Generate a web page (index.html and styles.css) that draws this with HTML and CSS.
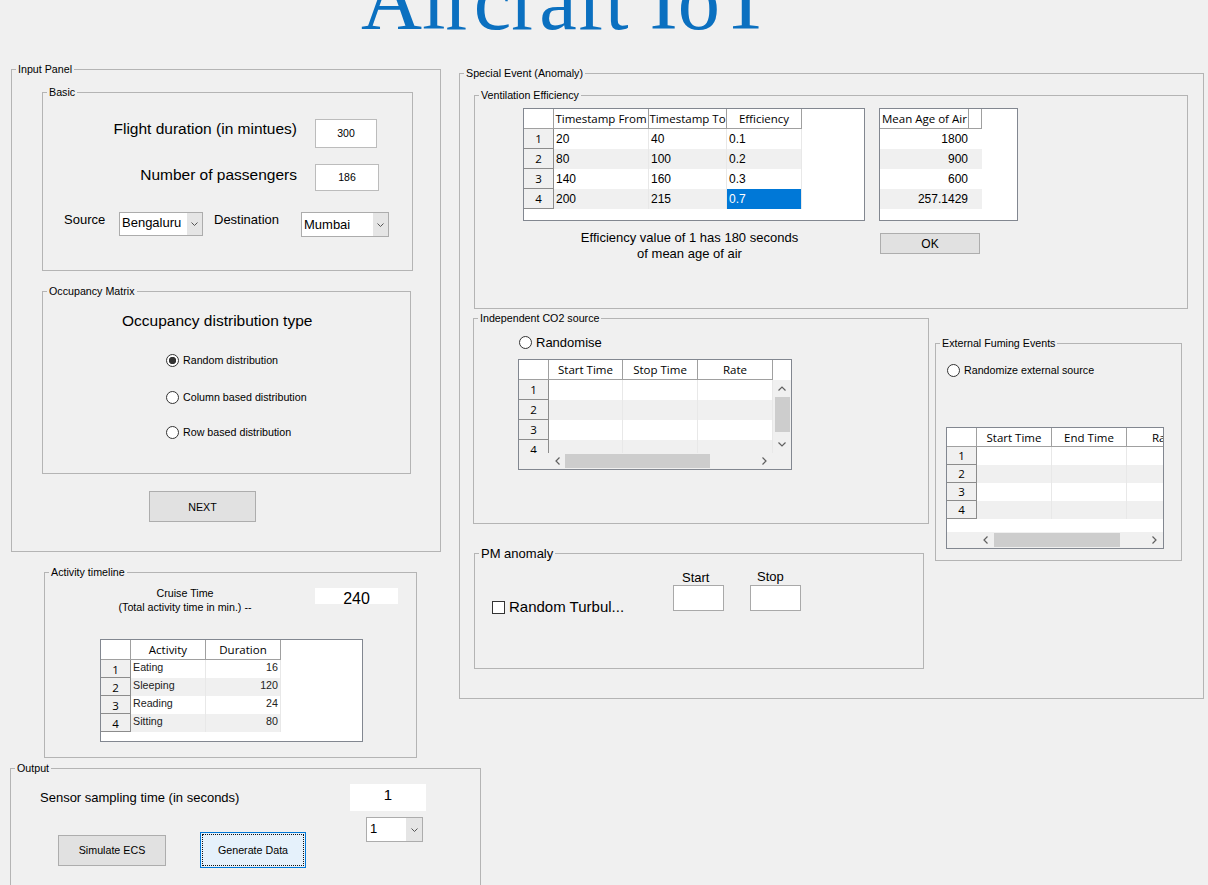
FILE: index.html
```html
<!DOCTYPE html>
<html>
<head>
<meta charset="utf-8">
<title>Aircraft IoT</title>
<link rel="stylesheet" href="styles.css">
</head>
<body>
<div class="app">
  <h1 class="title">Aircraft IoT</h1>
  <div class="main">
    <div class="col-left">
      <fieldset class="panel p-input">
        <legend>Input Panel</legend>
        <fieldset class="panel p-basic">
          <legend>Basic</legend>
          <div class="brow brow1"><div class="lbl-big">Flight duration (in mintues)</div><div class="edit e300">300</div></div>
          <div class="brow brow2"><div class="lbl-big lbl2">Number of passengers</div><div class="edit e186">186</div></div>
          <div class="brow brow3">
            <div class="lbl-src">Source</div>
            <div class="select sel-beng"><span class="sel-text">Bengaluru</span><span class="sel-arrow"><svg width="7" height="4" viewBox="0 0 7 4"><path d="M0.5 0.5 L3.5 3.5 L6.5 0.5" fill="none" stroke="#555" stroke-width="1"/></svg></span></div>
            <div class="lbl-dst">Destination</div>
            <div class="select sel-mum"><span class="sel-text">Mumbai</span><span class="sel-arrow"><svg width="7" height="4" viewBox="0 0 7 4"><path d="M0.5 0.5 L3.5 3.5 L6.5 0.5" fill="none" stroke="#555" stroke-width="1"/></svg></span></div>
          </div>
        </fieldset>
        <fieldset class="panel p-occ">
          <legend>Occupancy Matrix</legend>
          <div class="occ-head">Occupancy distribution type</div>
          <div class="radio-row r1"><span class="radio on"></span><span>Random distribution</span></div>
          <div class="radio-row r2"><span class="radio"></span><span>Column based distribution</span></div>
          <div class="radio-row r3"><span class="radio"></span><span>Row based distribution</span></div>
        </fieldset>
        <button class="btn btn-next">NEXT</button>
      </fieldset>

      <fieldset class="panel p-act">
        <legend>Activity timeline</legend>
        <div class="act-top">
          <div class="cruise">Cruise Time<br>(Total activity time in min.) --</div>
          <div class="box240">240</div>
        </div>
        <div class="uit t-act">
          <div class="tg tg-act">
            <div class="hc"></div><div class="hc">Activity</div><div class="hc">Duration</div>
            <div class="rn">1</div><div class="dc">Eating</div><div class="dc num">16</div>
            <div class="rn">2</div><div class="dc alt">Sleeping</div><div class="dc alt num">120</div>
            <div class="rn">3</div><div class="dc">Reading</div><div class="dc num">24</div>
            <div class="rn">4</div><div class="dc alt">Sitting</div><div class="dc alt num">80</div>
          </div>
        </div>
      </fieldset>

      <fieldset class="panel p-out">
        <legend>Output</legend>
        <div class="out-body">
          <div class="out-left">
            <div class="out-label">Sensor sampling time (in seconds)</div>
            <div class="out-btns">
              <button class="btn b-sim">Simulate ECS</button>
              <button class="btn b-gen">Generate Data</button>
            </div>
          </div>
          <div class="out-right">
            <div class="box-one">1</div>
            <div class="select sel-one"><span class="sel-text">1</span><span class="sel-arrow"><svg width="7" height="4" viewBox="0 0 7 4"><path d="M0.5 0.5 L3.5 3.5 L6.5 0.5" fill="none" stroke="#555" stroke-width="1"/></svg></span></div>
          </div>
        </div>
      </fieldset>
    </div>

    <div class="col-right">
      <fieldset class="panel p-special">
        <legend>Special Event (Anomaly)</legend>
        <fieldset class="panel p-vent">
          <legend>Ventilation Efficiency</legend>
          <div class="vent-body">
            <div class="vent-col">
              <div class="uit t-vent">
                <div class="tg tg-vent">
                  <div class="hc"></div><div class="hc">Timestamp From</div><div class="hc">Timestamp To</div><div class="hc">Efficiency</div>
                  <div class="rn">1</div><div class="dc">20</div><div class="dc">40</div><div class="dc">0.1</div>
                  <div class="rn">2</div><div class="dc alt">80</div><div class="dc alt">100</div><div class="dc alt">0.2</div>
                  <div class="rn">3</div><div class="dc">140</div><div class="dc">160</div><div class="dc">0.3</div>
                  <div class="rn">4</div><div class="dc alt">200</div><div class="dc alt">215</div><div class="dc sel">0.7</div>
                </div>
              </div>
              <div class="vent-note">Efficiency value of 1 has 180 seconds<br>of mean age of air</div>
            </div>
            <div class="age-col">
              <div class="uit t-age">
                <div class="tg tg-age">
                  <div class="hc hl">Mean Age of Air</div><div class="hc"></div>
                  <div class="dc num">1800</div><div class="dc"></div>
                  <div class="dc alt num">900</div><div class="dc alt"></div>
                  <div class="dc num">600</div><div class="dc"></div>
                  <div class="dc alt num">257.1429</div><div class="dc alt"></div>
                </div>
              </div>
              <button class="btn btn-ok">OK</button>
            </div>
          </div>
        </fieldset>

        <div class="lower">
          <div class="lower-left">
            <fieldset class="panel p-co2">
              <legend>Independent CO2 source</legend>
              <div class="radio-row co2-radio"><span class="radio"></span><span>Randomise</span></div>
              <div class="uit t-co2">
                <div class="sg sg-co2">
                  <div class="vp">
                    <div class="tg tg-co2">
                      <div class="hc"></div><div class="hc">Start Time</div><div class="hc">Stop Time</div><div class="hc">Rate</div>
                      <div class="rn">1</div><div class="dc"></div><div class="dc"></div><div class="dc"></div>
                      <div class="rn">2</div><div class="dc alt"></div><div class="dc alt"></div><div class="dc alt"></div>
                      <div class="rn">3</div><div class="dc"></div><div class="dc"></div><div class="dc"></div>
                      <div class="rn">4</div><div class="dc alt"></div><div class="dc alt"></div><div class="dc alt"></div>
                    </div>
                  </div>
                  <div class="vscroll">
                    <div class="vs-head"></div>
                    <div class="vs-track">
                      <div class="sb-btn sb-v"><svg width="8" height="5" viewBox="0 0 8 5"><path d="M0.5 4.5 L4 1 L7.5 4.5" fill="none" stroke="#606060" stroke-width="1.2"/></svg></div>
                      <div class="vs-thumb"></div>
                      <div class="sb-fill"></div>
                      <div class="sb-btn sb-v"><svg width="8" height="5" viewBox="0 0 8 5"><path d="M0.5 0.5 L4 4 L7.5 0.5" fill="none" stroke="#606060" stroke-width="1.2"/></svg></div>
                    </div>
                  </div>
                  <div class="hscroll">
                    <div class="hs-gap"></div>
                    <div class="sb-btn sb-h hs-l16"><svg width="5" height="8" viewBox="0 0 5 8"><path d="M4.5 0.5 L1 4 L4.5 7.5" fill="none" stroke="#606060" stroke-width="1.2"/></svg></div>
                    <div class="hs-thumb co2-thumb"></div>
                    <div class="sb-fill"></div>
                    <div class="sb-btn sb-h"><svg width="5" height="8" viewBox="0 0 5 8"><path d="M0.5 0.5 L4 4 L0.5 7.5" fill="none" stroke="#606060" stroke-width="1.2"/></svg></div>
                  </div>
                  <div class="sb-corner"></div>
                </div>
              </div>
            </fieldset>

            <fieldset class="panel p-pm">
              <legend>PM anomaly</legend>
              <div class="pm-body">
                <div class="pm-check"><span class="checkbox"></span><span>Random Turbul...</span></div>
                <div class="pm-field">
                  <div class="pm-lbl pm-start">Start</div>
                  <div class="pm-edit"></div>
                </div>
                <div class="pm-field pm-stop">
                  <div class="pm-lbl pm-stoplbl">Stop</div>
                  <div class="pm-edit"></div>
                </div>
              </div>
            </fieldset>
          </div>

          <fieldset class="panel p-ext">
            <legend>External Fuming Events</legend>
            <div class="radio-row ext-radio"><span class="radio"></span><span>Randomize external source</span></div>
            <div class="uit t-ext">
              <div class="sg sg-ext">
                <div class="vp">
                  <div class="tg tg-ext">
                    <div class="hc"></div><div class="hc">Start Time</div><div class="hc">End Time</div><div class="hc">Rate</div>
                    <div class="rn">1</div><div class="dc"></div><div class="dc"></div><div class="dc"></div>
                    <div class="rn">2</div><div class="dc alt"></div><div class="dc alt"></div><div class="dc alt"></div>
                    <div class="rn">3</div><div class="dc"></div><div class="dc"></div><div class="dc"></div>
                    <div class="rn">4</div><div class="dc alt"></div><div class="dc alt"></div><div class="dc alt"></div>
                  </div>
                </div>
                <div class="hscroll">
                  <div class="hs-gap"></div>
                  <div class="sb-btn sb-h"><svg width="5" height="8" viewBox="0 0 5 8"><path d="M4.5 0.5 L1 4 L4.5 7.5" fill="none" stroke="#606060" stroke-width="1.2"/></svg></div>
                  <div class="hs-thumb ext-thumb"></div>
                  <div class="sb-fill"></div>
                  <div class="sb-btn sb-h"><svg width="5" height="8" viewBox="0 0 5 8"><path d="M0.5 0.5 L4 4 L0.5 7.5" fill="none" stroke="#606060" stroke-width="1.2"/></svg></div>
                </div>
              </div>
            </div>
          </fieldset>
        </div>
      </fieldset>
    </div>
  </div>
</div>
</body>
</html>
```

FILE: styles.css
```css
* { box-sizing: border-box; }
html, body { margin: 0; padding: 0; background: #f0f0f0; }
body { font-family: "Liberation Sans", Arial, sans-serif; color: #000; }

.app { display: flow-root; width: 1208px; height: 885px; overflow: hidden; background: #f0f0f0; }

.title {
  margin: -41px 0 0;
  padding-left: 361px;
  height: 104px;
  font-family: "Liberation Serif", "Times New Roman", serif;
  font-weight: 400;
  font-size: 84.5px;
  line-height: 84.5px;
  color: #0b70c0;
  white-space: nowrap;
}

.main { display: flex; align-items: flex-start; }
.col-left { flex: none; width: 449px; margin-left: 10px; }
.col-right { flex: none; width: 745px; margin-top: 4px; }

/* panels */
.panel { display: block; margin: 0; padding: 0; min-width: 0; border: 1px solid #b4b4b4; }
.panel > legend { margin-left: 4px; padding: 0 2px; font-size: 10.7px; line-height: 13px; }

.p-input { width: 430px; height: 489px; margin-left: 1px; }
.p-basic { width: 371px; height: 185px; margin: 10px 0 0 30px; }
.p-occ { width: 369px; height: 189px; margin: 14px 0 0 30px; }
.p-act { width: 373px; height: 192px; margin: 14px 0 0 34px; }
.p-out { width: 471px; height: 135px; margin-top: 4px; }

.p-special { width: 745px; height: 632px; }
.p-vent { width: 714px; height: 220px; margin: 9px 0 0 14px; }
.lower { display: flex; align-items: flex-start; margin-top: 3px; }
.lower-left { flex: none; margin-left: 13px; }
.p-co2 { width: 456px; height: 212px; }
.p-pm { width: 450px; height: 123px; margin: 22px 0 0 1px; }
.p-pm > legend { font-size: 13px; line-height: 15px; }
.p-ext { flex: none; width: 247px; height: 224px; margin: 25px 0 0 6px; }

/* controls */
.btn {
  display: block; padding: 0; margin: 0;
  font-family: "Liberation Sans", Arial, sans-serif; font-size: 10.7px; color: #000;
  background: #e1e1e1; border: 1px solid #adadad;
}
.edit { background: #fff; border: 1px solid #bcbcbc; text-align: center; font-size: 10.5px; }

.select { display: flex; background: #fff; border: 1px solid #acacac; }
.sel-text { flex: 1; padding-left: 2px; font-size: 13px; white-space: nowrap; overflow: hidden; }
.sel-arrow { flex: none; width: 15px; background: #e5e5e5; display: flex; align-items: center; justify-content: center; }

.radio-row { display: flex; align-items: center; height: 13px; font-size: 10.7px; line-height: 13px; white-space: nowrap; }
.radio {
  flex: none; width: 13px; height: 13px; margin-right: 4px;
  border: 1px solid #333; border-radius: 50%; background: #fff;
}
.radio.on { background: radial-gradient(circle, #333 0 3.4px, #fff 4px); }
.checkbox { flex: none; width: 13px; height: 13px; margin-right: 4px; border: 1px solid #333; background: #fff; }

/* basic */
.brow { display: flex; align-items: flex-start; }
.brow1 { margin-top: 20px; }
.brow2 { margin-top: 16px; }
.brow3 { margin-top: 21px; }
.lbl-big { width: 254px; text-align: right; font-size: 15.5px; line-height: 18px; margin-top: 1px; white-space: nowrap; }
.lbl2 { margin-top: 2px; }
.e300 { width: 62px; height: 29px; line-height: 27px; margin-left: 18px; }
.e186 { width: 64px; height: 27px; line-height: 25px; margin-left: 18px; }
.lbl-src { width: 55px; margin-left: 21px; font-size: 13px; line-height: 15px; }
.lbl-dst { width: 87px; margin-left: 11px; font-size: 13px; line-height: 15px; }
.sel-beng { width: 84px; height: 24px; }
.sel-beng .sel-text { line-height: 19px; }
.sel-mum { width: 88px; height: 25px; }
.sel-mum .sel-text { line-height: 23px; }

/* occupancy */
.occ-head { margin: 14px 0 0 79px; font-size: 15.5px; line-height: 18px; white-space: nowrap; }
.p-occ .radio-row { margin-left: 123px; }
.r1 { margin-top: 24px; }
.r2 { margin-top: 24px; }
.r3 { margin-top: 22px; }
.btn-next { width: 107px; height: 31px; margin: 17px 0 0 137px; }

/* activity */
.act-top { display: flex; align-items: flex-start; height: 35px; }
.cruise { width: 160px; margin: 7px 0 0 60px; text-align: center; font-size: 10.7px; line-height: 14px; white-space: nowrap; }
.box240 { width: 83px; height: 16px; margin: 9px 0 0 50px; background: #fff; text-align: center; font-size: 16px; line-height: 16px; padding-top: 3px; }
.t-act { width: 263px; height: 103px; margin: 25px 0 0 55px; }

/* output */
.out-body { display: flex; align-items: flex-start; }
.out-left { flex: none; width: 339px; }
.out-label { margin: 15px 0 0 29px; font-size: 13px; line-height: 15px; white-space: nowrap; }
.out-btns { display: flex; align-items: center; margin-top: 27px; }
.b-sim { width: 108px; height: 31px; margin-left: 47px; }
.b-gen { width: 106px; height: 36px; margin-left: 34px; background: #e5f1fb; border: 1px solid #0078d7; outline: 1px dotted #111; outline-offset: -3px; }
.box-one { width: 76px; height: 27px; margin-top: 9px; background: #fff; text-align: center; font-size: 15px; line-height: 22px; }
.sel-one { width: 57px; height: 25px; margin: 6px 0 0 16px; }
.sel-one .sel-text { line-height: 21px; padding-left: 3px; }
.sel-one .sel-arrow { width: 16px; }

/* tables */
.uit { background: #fff; border: 1px solid #828790; overflow: hidden; }
.tg { display: grid; }
.hc {
  display: flex; align-items: center; justify-content: center;
  background: #fff; border-right: 1px solid #a0a0a0; border-bottom: 1px solid #a0a0a0;
  font-family: "Open Sans", "Noto Sans", sans-serif; font-size: 11.5px; white-space: nowrap; overflow: hidden;
}
.hc.hl { justify-content: flex-start; padding-left: 2px; }
.rn {
  display: flex; align-items: center; justify-content: center;
  background: #f0f0f0; border-right: 1px solid #8c8c8c; border-bottom: 1px solid #8c8c8c;
  font-family: "Open Sans", "Noto Sans", sans-serif; font-size: 11.5px;
}
.dc { background: #fff; border-right: 1px solid #e8e8e8; padding: 0 2px; white-space: nowrap; overflow: hidden; font-size: 12px; }
.dc.alt { background: #f0f0f0; }
.dc.num { text-align: right; }
.dc.sel { background: #0078d7; color: #fff; }

.tg-act { grid-template-columns: 30px 75px 75px; grid-template-rows: 20px repeat(4, 18px); }
.tg-act .dc { font-size: 10.7px; line-height: 14px; color: #222; }
.tg-act .rn { padding-top: 2px; }

.vent-body { display: flex; align-items: flex-start; margin: 6px 0 0 48px; }
.vent-col { flex: none; width: 342px; }
.t-vent { width: 342px; height: 113px; }
.tg-vent { grid-template-columns: 30px 95px 78px 75px; grid-template-rows: 20px repeat(4, 20px); }
.tg-vent .dc { line-height: 20px; }
.vent-note { margin-top: 9px; padding-right: 9px; text-align: center; font-size: 13px; line-height: 16px; white-space: nowrap; }

.age-col { flex: none; margin-left: 14px; }
.t-age { width: 139px; height: 113px; }
.tg-age { grid-template-columns: 89px 13px; grid-template-rows: 20px repeat(4, 20px); }
.tg-age .dc { line-height: 20px; padding-right: 1px; border-right: none; }
.btn-ok { width: 100px; height: 21px; margin: 12px 0 0 1px; font-size: 12px; }

/* co2 */
.co2-radio { margin: 11px 0 0 45px; font-size: 13px; }
.t-co2 { width: 274px; height: 111px; margin: 10px 0 0 44px; }
.sg { display: grid; }
.sg-co2 { grid-template-columns: 254px 18px; grid-template-rows: 93px 16px; }
.vp { overflow: hidden; background: #fff; }
.tg-co2 { grid-template-columns: 30px 74px 75px 75px; grid-template-rows: 20px repeat(4, 20px); }
.vscroll { display: flex; flex-direction: column; }
.vs-head { height: 20px; background: #fff; }
.vs-track { flex: 1; display: flex; flex-direction: column; background: #f0f0f0; }
.sb-btn { flex: none; display: flex; align-items: center; justify-content: center; background: #f0f0f0; }
.sb-v { height: 17px; }
.sb-h { width: 17px; }
.hs-l16 { width: 16px; }
.vs-thumb { flex: none; height: 35px; margin: 0 1px 0 2px; background: #cdcdcd; }
.sb-fill { flex: 1; }
.hscroll { display: flex; background: #f0f0f0; }
.hs-gap { flex: none; width: 30px; }
.hs-thumb { flex: none; margin: 1px 0; background: #cdcdcd; }
.co2-thumb { width: 145px; }
.ext-thumb { width: 126px; }
.sb-corner { background: #f0f0f0; }

/* pm */
.pm-body { display: flex; align-items: flex-start; }
.pm-check { flex: none; display: flex; align-items: center; width: 181px; height: 18px; margin: 37px 0 0 17px; font-size: 15px; line-height: 18px; white-space: nowrap; }
.pm-field { flex: none; margin-top: 9px; }
.pm-stop { margin-left: 26px; }
.pm-lbl { font-size: 13px; line-height: 15px; }
.pm-start { padding-left: 9px; }
.pm-stoplbl { padding-left: 7px; margin-top: -1px; margin-bottom: 1px; }
.pm-edit { width: 51px; height: 26px; background: #fff; border: 1px solid #a9a9a9; }

/* ext */
.ext-radio { margin: 14px 0 0 11px; }
.t-ext { width: 218px; height: 122px; margin: 50px 0 0 10px; }
.sg-ext { grid-template-columns: 216px; grid-template-rows: 104px 16px; }
.tg-ext { grid-template-columns: 30px 75px 75px 75px; grid-template-rows: 19px repeat(4, 18px); }
```
